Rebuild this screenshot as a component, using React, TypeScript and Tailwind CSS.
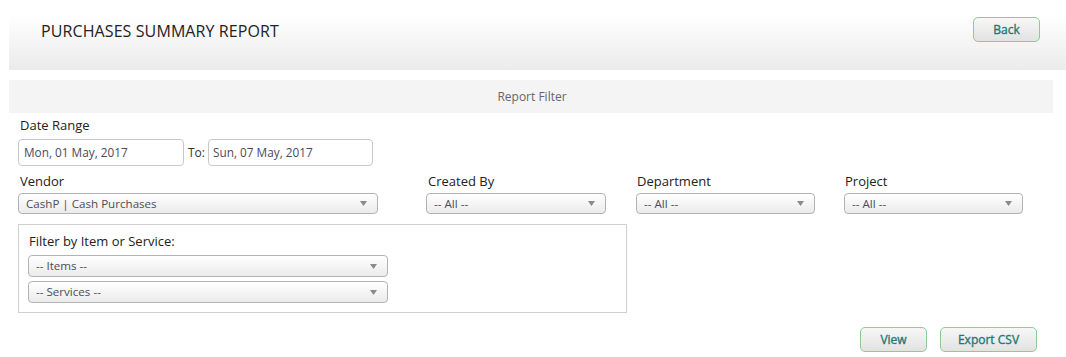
import React from 'react';

const Arrow = () => (
    <svg width="7" height="5" viewBox="0 0 7 5" className="shrink-0">
        <path d="M0 0 L7 0 L3.5 5 Z" fill="#8a8a8a" />
    </svg>
);

const Select = ({ label, width, height = 'h-[21px]' }: { label: string; width: string; height?: string }) => (
    <div className={`${width} ${height} flex items-center justify-between pl-[7px] pr-[10px] border border-[#b3b3b3] rounded-[4px] bg-gradient-to-b from-white to-[#ebebeb] text-[11.6px] text-[#4d4d58]`}>
        <span>{label}</span>
        <Arrow />
    </div>
);

const GreenButton = ({ children, width }: { children: React.ReactNode; width: string }) => (
    <button className={`${width} h-[25px] pt-[1px] rounded-[5px] border border-[#8ccb92] bg-gradient-to-b from-[#f7f7f7] to-[#e2e2e2] text-[12px] font-normal text-[#1b7a70] [-webkit-text-stroke:0.35px]`}>
        {children}
    </button>
);

const App = () => {
    return (
        <div className="w-[1066px] h-[357px] bg-white pt-[14px] font-['Open_Sans',sans-serif] overflow-hidden">
            {/* header */}
            <div className="ml-[9px] h-[56px] flex items-start justify-between pt-[3px] pl-[32px] pr-[26px] bg-gradient-to-b from-white to-[#ebebeb]">
                <h1 className="mt-[3px] text-[16px] leading-[22px] text-[#222] tracking-[0.1px]">PURCHASES SUMMARY REPORT</h1>
                <GreenButton width="w-[67px]">Back</GreenButton>
            </div>

            <div className="ml-[9px] mt-[10px] w-[1044px] h-[33px] bg-[#f4f4f4] flex items-center justify-center pl-[2px] text-[12px] text-[#666]">
                Report Filter
            </div>

            <div className="pl-[18px]">
                <div className="mt-[3px] pl-[2px] text-[13px] leading-[18px] text-[#222]">Date Range</div>
                <div className="mt-[5px] flex items-center">
                    <div className="w-[166px] h-[27px] flex items-center pl-[5px] border border-[#c8c8c8] rounded-[4px] text-[11.8px] text-[#4a4a5a]">
                        Mon, 01 May, 2017
                    </div>
                    <span className="ml-[4px] mr-[3px] text-[12px] text-[#333]">To:</span>
                    <div className="w-[165px] h-[27px] flex items-center pl-[4px] border border-[#c8c8c8] rounded-[4px] text-[11.8px] text-[#4a4a5a]">
                        Sun, 07 May, 2017
                    </div>
                </div>

                <div className="mt-[6px] grid grid-cols-[408px_210px_209px_210px] text-[13px] leading-[18px] text-[#222]">
                    <div>
                        <div className="pl-[2px]">Vendor</div>
                        <div className="mt-[3px]"><Select label="CashP | Cash Purchases" width="w-[360px]" /></div>
                    </div>
                    <div>
                        <div className="pl-[2px]">Created By</div>
                        <div className="mt-[3px]"><Select label="-- All --" width="w-[180px]" /></div>
                    </div>
                    <div>
                        <div className="pl-[1px]">Department</div>
                        <div className="mt-[3px]"><Select label="-- All --" width="w-[179px]" /></div>
                    </div>
                    <div className="-ml-[1px]">
                        <div className="pl-[1px]">Project</div>
                        <div className="mt-[3px]"><Select label="-- All --" width="w-[179px]" /></div>
                    </div>
                </div>

                <div className="mt-[10px] w-[609px] h-[89px] border border-[#cfcfcf] pl-[9px] pt-[7px]">
                    <div className="pl-[1px] text-[13px] leading-[18px] text-[#222]">Filter by Item or Service:</div>
                    <div className="mt-[5px] flex flex-col gap-[4px]">
                        <Select label="-- Items --" width="w-[360px]" height="h-[22px]" />
                        <Select label="-- Services --" width="w-[360px]" height="h-[22px]" />
                    </div>
                </div>
            </div>

            <div className="mt-[14px] pr-[29px] flex justify-end gap-[13px]">
                <GreenButton width="w-[67px]">View</GreenButton>
                <GreenButton width="w-[97px]">Export CSV</GreenButton>
            </div>
        </div>
    );
};

export default App;
